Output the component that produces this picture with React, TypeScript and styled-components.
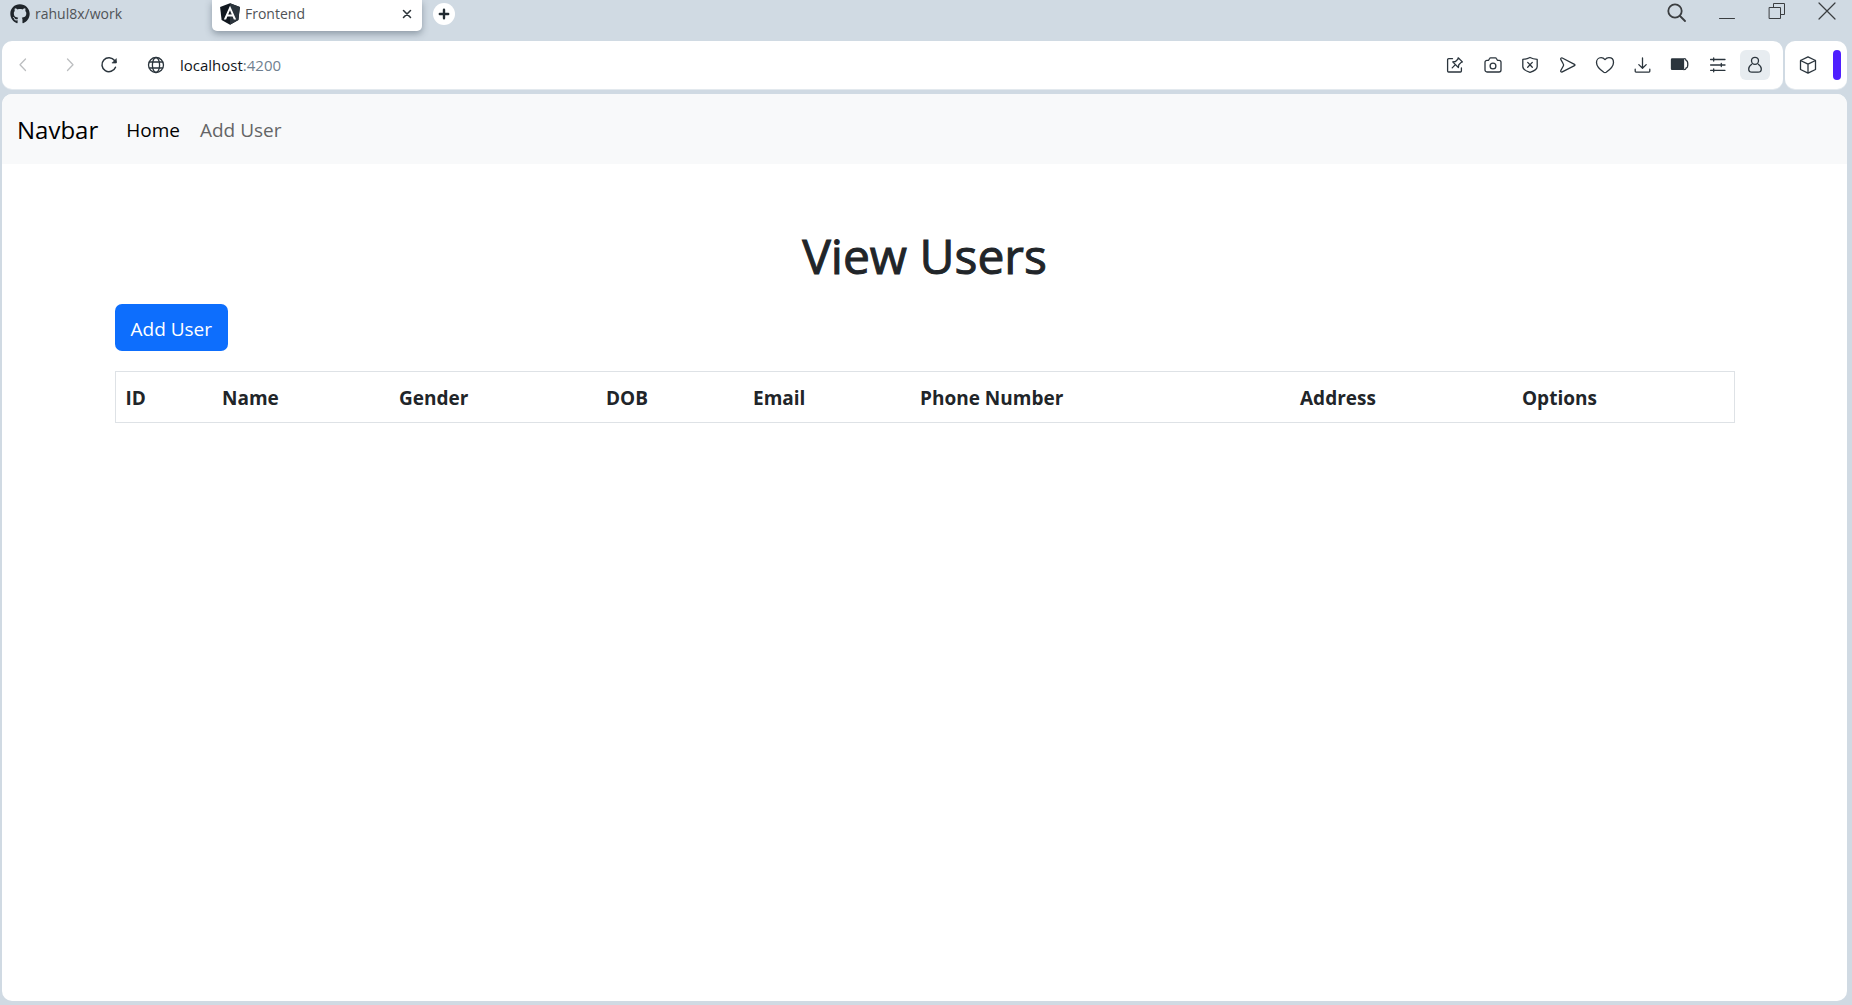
import React from "react";
import styled, { createGlobalStyle, css } from "styled-components";
import { FaGithub } from "react-icons/fa";

const GlobalStyle = createGlobalStyle`
  *, *::before, *::after { box-sizing: border-box; }
  body {
    margin: 0;
    background: #d0dae3;
    font-family: "Open Sans", "Noto Sans", sans-serif;
  }
  button { font-family: inherit; }
`;

const Window = styled.div`
  display: flex;
  flex-direction: column;
  min-height: 100vh;
  padding: 0 5px 4px 2px;
`;

/* ---------- tab strip ---------- */

const TabStrip = styled.header`
  display: flex;
  align-items: flex-start;
  height: 41px;
  color: #4f5357;
`;

const Tab = styled.div<{ $active?: boolean }>`
  display: flex;
  align-items: center;
  gap: 5px;
  width: 210px;
  height: 31px;
  padding: 0 8px 4px;
  font-size: 14px;
  line-height: 20px;
  ${(p) =>
    p.$active &&
    css`
      background: #fff;
      border-radius: 0 0 5px 5px;
      box-shadow: 0 3px 7px rgba(60, 75, 90, 0.45);
    `}
`;

const TabIcon = styled.span`
  display: flex;
  color: #1f252b;
`;

const TabTitle = styled.span`
  flex: 1;
`;

const PlainButton = styled.button`
  display: flex;
  align-items: center;
  justify-content: center;
  padding: 0;
  border: 0;
  background: none;
  color: inherit;
  cursor: pointer;
`;

const TabClose = styled(PlainButton)`
  width: 14px;
  height: 14px;
  color: #2b3338;
`;

const NewTab = styled(PlainButton)`
  width: 22px;
  height: 22px;
  margin: 3px 0 0 11px;
  border-radius: 50%;
  background: #fff;
  color: #222b31;
`;

const WindowControls = styled.div`
  display: flex;
  gap: 30px;
  margin-left: auto;
  padding: 2px 10px 0 0;
  color: #3a3d40;
`;

const WindowButton = styled(PlainButton)`
  width: 20px;
  height: 20px;
`;

/* ---------- toolbar ---------- */

const ToolbarRow = styled.div`
  display: flex;
  gap: 2px;
  height: 48px;
  margin-bottom: 5px;
  color: #2b353d;
`;

const Bar = styled.div`
  display: flex;
  align-items: center;
  background: #fff;
  border-radius: 10px;
  box-shadow: 0 1px 0 #e3e9ee;
`;

const MainBar = styled(Bar)`
  flex: 1;
  padding: 0 13px 0 11px;
`;

const SideBar = styled(Bar)`
  justify-content: space-between;
  width: 62px;
  padding: 0 6px 0 13px;
`;

const NavGroup = styled.div`
  display: flex;
  gap: 23px;
  margin-right: 22px;
`;

const IconButton = styled(PlainButton)<{ $muted?: boolean }>`
  width: 20px;
  height: 20px;
  color: ${(p) => (p.$muted ? "#bcbec0" : "inherit")};
`;

const Address = styled.button`
  display: flex;
  flex: 1;
  align-items: center;
  gap: 14px;
  padding: 0 5px;
  border: 0;
  background: none;
  color: #2b353d;
  font-size: 15px;
  line-height: 20px;
  text-align: left;
  cursor: text;
`;

const Host = styled.span`
  color: #11151a;
`;

const Port = styled.span`
  color: #6f7f8f;
`;

const Tools = styled.div`
  display: flex;
  justify-content: space-between;
  width: 330px;
`;

const Tool = styled(PlainButton)<{ $selected?: boolean }>`
  width: 30px;
  height: 30px;
  border-radius: 6px;
  background: ${(p) => (p.$selected ? "#e7ecf0" : "none")};
`;

const Accent = styled.span`
  width: 8px;
  height: 30px;
  border-radius: 4px;
  background: #4f1fff;
`;

/* ---------- page ---------- */

const Page = styled.div`
  flex: 1;
  overflow: hidden;
  border-radius: 10px;
  background: #fff;
  color: #212529;
  font-size: 19px;
  line-height: 30px;
`;

const Navbar = styled.nav`
  display: flex;
  align-items: center;
  height: 70px;
  padding: 2px 15px 0;
  background: #f8f9fa;
`;

const Brand = styled.a`
  margin-right: 18px;
  color: #000;
  font-size: 24px;
  text-decoration: none;
`;

const NavLink = styled.a<{ $active?: boolean }>`
  padding: 10px;
  color: ${(p) => (p.$active ? "#000" : "#646566")};
  text-decoration: none;
`;

const Container = styled.main`
  max-width: 1650px;
  margin: 62px auto 0;
  padding: 0 15px;
`;

const Title = styled.h1`
  margin: 0 0 18px;
  font-size: 48px;
  font-weight: 500;
  line-height: 60px;
  text-align: center;
  -webkit-text-stroke: 1px currentColor;
`;

const AddButton = styled.button`
  display: block;
  height: 47px;
  margin: 0 0 20px;
  padding: 2px 16px 0;
  border: 0;
  border-radius: 7px;
  background: #0d6efd;
  color: #fff;
  font-size: 19px;
  line-height: 30px;
  cursor: pointer;
`;

const Table = styled.table`
  width: 100%;
  table-layout: fixed;
  border: 1px solid #dee2e6;
  border-collapse: collapse;
`;

const Col = styled.col<{ $width: number }>`
  width: ${(p) => p.$width}px;
`;

const HeadCell = styled.th`
  padding: 11px 10px 9px;
  font-weight: 700;
  font-size: 19px;
  line-height: 30px;
  text-align: left;
  white-space: nowrap;
`;

/* ---------- icons ---------- */

type IconProps = { children: React.ReactNode; size?: number; weight?: number };

const Icon = ({ children, size = 20, weight = 1.3 }: IconProps) => (
  <svg
    width={size}
    height={size}
    viewBox="0 0 20 20"
    fill="none"
    stroke="currentColor"
    strokeWidth={weight}
    strokeLinecap="round"
    strokeLinejoin="round"
    aria-hidden="true"
  >
    {children}
  </svg>
);

const AngularLogo = () => (
  <svg width="20" height="22" viewBox="31 30 188 200" aria-hidden="true">
    <path d="M125 30L31.900 63.200l14.200 123.100L125 230l78.900-43.700 14.200-123.100z" fill="#11181f" />
    <path d="M125 30v200l78.900-43.700 14.200-123.100z" fill="#2c353d" />
    <path
      d="M125 52.100L66.800 182.600h21.700l11.700-29.200h49.400l11.700 29.200H183zM142 135.400h-34l17-40.900z"
      fill="#fff"
    />
  </svg>
);

const tools: { label: string; selected?: boolean; art: React.ReactNode }[] = [
  {
    label: "Pinboards",
    art: (
      <>
        <path d="M7.500 3.700H3.600a1 1 0 0 0-1 1V16a1 1 0 0 0 1 1h11.800a1 1 0 0 0 1-1v-3" />
        <path d="M13.200 2.800l4.200 4.100-1.200.5-2.400 2.400-.4 2.700-5.700-5.600 2.800-.4 2.300-2.300zM10.400 9.600L7.200 12.900" />
      </>
    ),
  },
  {
    label: "Snapshot",
    art: (
      <>
        <path d="M4 5.300h1.600l1-1.800c.2-.4.5-.6 1-.6h4.800c.5 0 .8.2 1 .6l1 1.800H16a2 2 0 0 1 2 2V15a2 2 0 0 1-2 2H4a2 2 0 0 1-2-2V7.300a2 2 0 0 1 2-2z" />
        <circle cx="10" cy="11" r="2.900" />
      </>
    ),
  },
  {
    label: "Ad blocker",
    art: (
      <>
        <path d="M10 2.500c2.200 1.200 4.300 1.700 7.200 1.900v7.100c0 2.800-3.200 4.600-7.200 5.800-4-1.200-7.200-3-7.200-5.800V4.400C5.700 4.200 7.800 3.700 10 2.500z" />
        <path d="M7.700 7.400l4.600 4.800M12.300 7.400l-4.600 4.800" />
      </>
    ),
  },
  {
    label: "My Flow",
    art: (
      <path d="M4.300 3l12.200 6.300c.6.300.6 1 0 1.300L4.300 16.900c-1 .5-2-.4-1.500-1.400L5.300 11c.4-.7.4-1.400 0-2L2.800 4.400C2.300 3.400 3.300 2.500 4.300 3z" />
    ),
  },
  {
    label: "Bookmark",
    art: (
      <path d="M10 4.600C8.900 3.300 7.600 2.700 6.100 2.700 3.300 2.700 1.500 4.800 1.500 7.500c0 4.100 4.200 7.600 7.300 9.700.8.500 1.600.5 2.400 0 3.100-2.100 7.300-5.600 7.300-9.700 0-2.700-1.800-4.800-4.600-4.800-1.500 0-2.800.6-3.900 1.900z" />
    ),
  },
  {
    label: "Downloads",
    art: <path d="M9.500 3v10M5.800 9.600l3.700 3.700 3.700-3.700M2.200 14.200v2.100c0 .5.300.8.800.8h13c.5 0 .8-.3.800-.8v-2.100" />,
  },
  {
    label: "Battery saver",
    art: (
      <>
        <rect x="1.500" y="4" width="12" height="10.400" rx=".6" fill="currentColor" />
        <path d="M14 3.700c1.500 0 2 .5 2.100 1.700 1.300.2 1.700 1 1.700 3.800s-.4 3.600-1.700 3.800c-.1 1.200-.6 1.700-2.100 1.700" />
      </>
    ),
  },
  {
    label: "Easy setup",
    art: (
      <path d="M2.600 4.500h14.400M2.600 10h14.400M2.600 15.300h14.400M5.700 3v3M13.300 8.500v3M5.700 13.800v3" />
    ),
  },
  {
    label: "Profile",
    selected: true,
    art: (
      <>
        <circle cx="10" cy="5.800" r="3.500" />
        <path d="M6.700 9.200C5 10.300 3.700 12.200 3.700 14c0 2 1.200 3.200 3.300 3.200h6c2.100 0 3.300-1.200 3.300-3.200 0-1.800-1.300-3.700-3-4.800" />
      </>
    ),
  },
];

const columns = [
  { label: "ID", width: 97 },
  { label: "Name", width: 177 },
  { label: "Gender", width: 207 },
  { label: "DOB", width: 147 },
  { label: "Email", width: 167 },
  { label: "Phone Number", width: 380 },
  { label: "Address", width: 222 },
  { label: "Options", width: 222 },
];

export default function App() {
  return (
    <>
      <GlobalStyle />
      <Window>
        <TabStrip>
          <Tab>
            <TabIcon><FaGithub size={20} /></TabIcon>
            <TabTitle>rahul8x/work</TabTitle>
          </Tab>
          <Tab $active>
            <TabIcon><AngularLogo /></TabIcon>
            <TabTitle>Frontend</TabTitle>
            <TabClose aria-label="Close tab">
              <Icon size={14} weight={2.2}><path d="M5 5l10 10M15 5L5 15" /></Icon>
            </TabClose>
          </Tab>
          <NewTab aria-label="New tab">
            <Icon size={14} weight={3.4}><path d="M10 4v12M4 10h12" /></Icon>
          </NewTab>
          <WindowControls>
            <WindowButton aria-label="Search tabs">
              <Icon weight={1.8}><circle cx="8" cy="9" r="6.700" /><path d="M13 14l5 5" /></Icon>
            </WindowButton>
            <WindowButton aria-label="Minimize">
              <Icon weight={1}><path d="M2.500 16.500h15" /></Icon>
            </WindowButton>
            <WindowButton aria-label="Restore">
              <Icon weight={1}><path d="M2.500 5.500h11v11h-11zM6.500 5.500v-4h11v11h-4" /></Icon>
            </WindowButton>
            <WindowButton aria-label="Close window">
              <Icon weight={1.2}><path d="M2 1l16 16M18 1L2 17" /></Icon>
            </WindowButton>
          </WindowControls>
        </TabStrip>

        <ToolbarRow>
          <MainBar>
            <NavGroup>
              <IconButton $muted aria-label="Back">
                <Icon><path d="M12.500 4L7 9.800l5.500 5.700" /></Icon>
              </IconButton>
              <IconButton $muted aria-label="Forward">
                <Icon><path d="M11.500 4L17 9.800l-5.500 5.700" /></Icon>
              </IconButton>
              <IconButton aria-label="Reload">
                <Icon weight={1.5}>
                  <path d="M16.500 12.200A7 7 0 1 1 15.600 5.500L17 7" />
                  <path d="M17.300 4v4h-4z" fill="currentColor" strokeWidth=".7" />
                </Icon>
              </IconButton>
            </NavGroup>
            <Address aria-label="Edit address">
              <Icon>
                <circle cx="10" cy="10" r="7.500" />
                <ellipse cx="10" cy="10" rx="3.600" ry="7.500" />
                <path d="M3.400 7h13.200M3.400 13h13.200" />
              </Icon>
              <span><Host>localhost</Host><Port>:4200</Port></span>
            </Address>
            <Tools>
              {tools.map((t) => (
                <Tool key={t.label} $selected={t.selected} aria-label={t.label}>
                  <Icon>{t.art}</Icon>
                </Tool>
              ))}
            </Tools>
          </MainBar>
          <SideBar>
            <IconButton aria-label="Extensions">
              <Icon>
                <path d="M10 1.800l7.500 3.700v9L10 18.200l-7.500-3.700v-9zM2.500 5.500L10 9.200l7.500-3.700M10 9.200v9" />
              </Icon>
            </IconButton>
            <Accent />
          </SideBar>
        </ToolbarRow>

        <Page>
          <Navbar>
            <Brand href="#">Navbar</Brand>
            <NavLink $active href="#home">Home</NavLink>
            <NavLink href="#add-user">Add User</NavLink>
          </Navbar>
          <Container>
            <Title>View Users</Title>
            <AddButton>Add User</AddButton>
            <Table>
              <colgroup>
                {columns.map((c) => <Col key={c.label} $width={c.width} />)}
              </colgroup>
              <thead>
                <tr>
                  {columns.map((c) => <HeadCell key={c.label} scope="col">{c.label}</HeadCell>)}
                </tr>
              </thead>
            </Table>
          </Container>
        </Page>
      </Window>
    </>
  );
}
